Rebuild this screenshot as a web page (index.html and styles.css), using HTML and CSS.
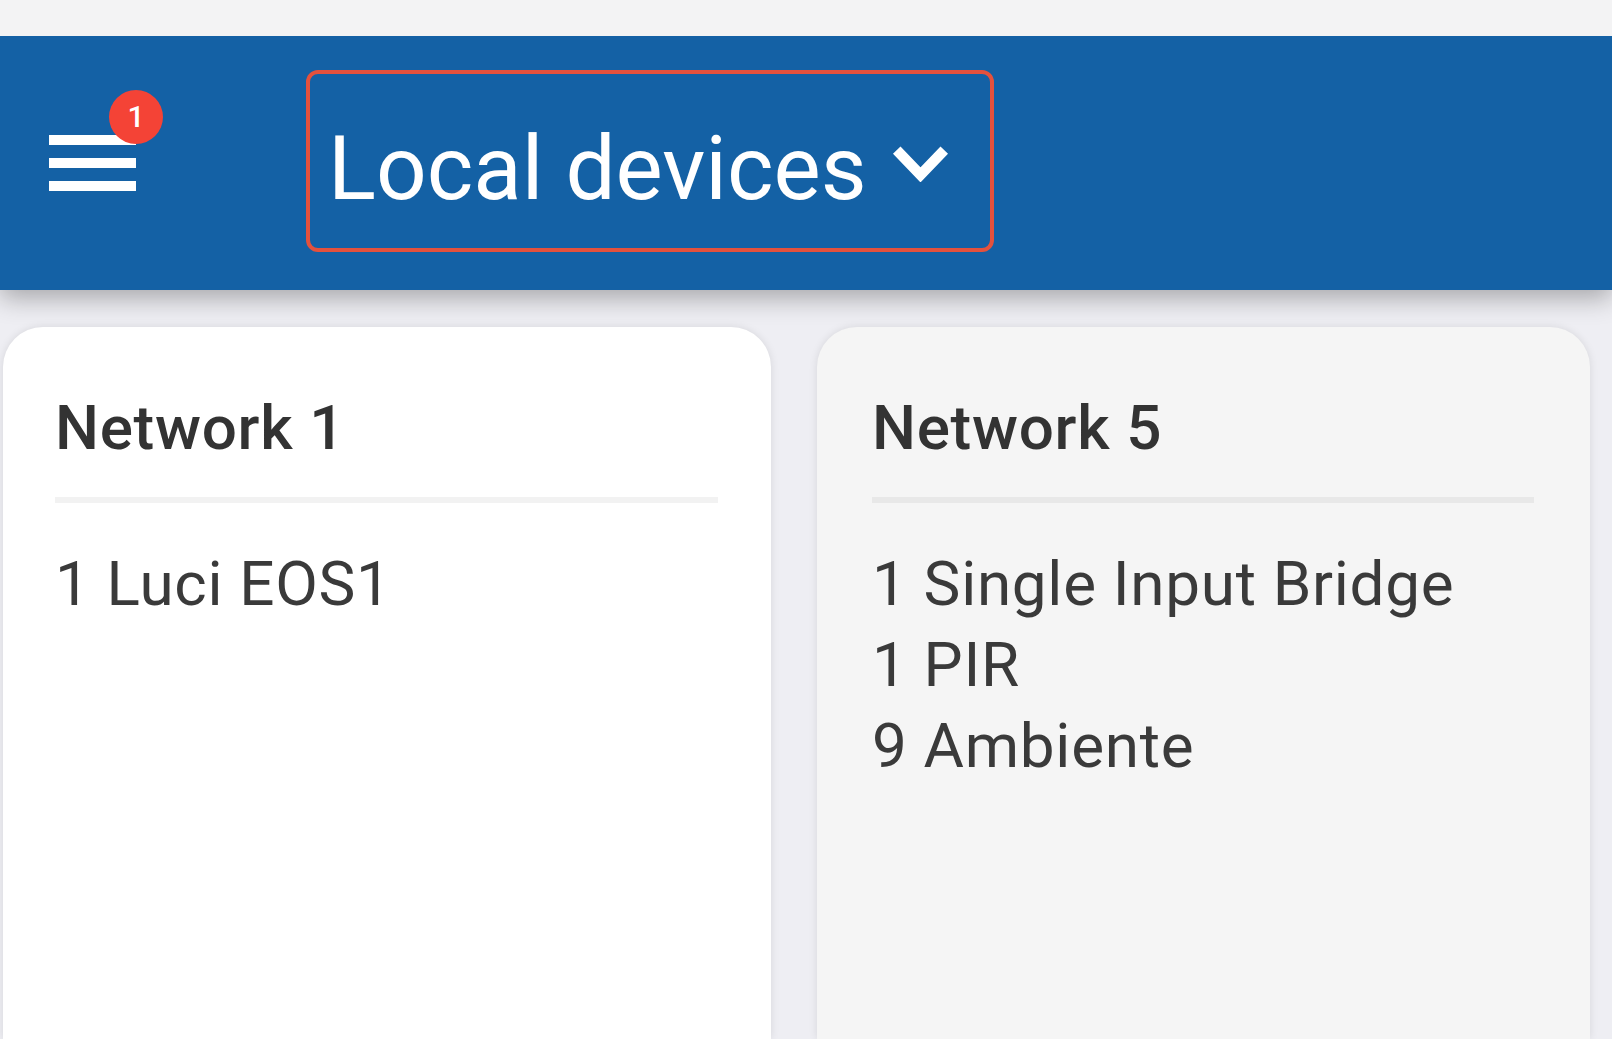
FILE: index.html
```html
<!DOCTYPE html>
<html>
<head>
  <title>Local devices</title>
  <meta charset="UTF-8">
  <link rel="stylesheet" href="styles.css">
</head>
<body>
  <div class="status-strip"></div>
  <header class="app-bar">
    <div class="menu-btn">
      <span class="menu-line"></span>
      <span class="menu-line"></span>
      <span class="menu-line"></span>
      <span class="badge">1</span>
    </div>
    <div class="device-select">
      <span class="device-select-label">Local devices</span>
      <svg class="chevron" viewBox="0 0 60 38" width="57" height="37">
        <path d="M5 5 L30 31 L55 5" fill="none" stroke="#ffffff" stroke-width="11"/>
      </svg>
    </div>
  </header>
  <main class="network-grid">
    <section class="card">
      <h2 class="card-title">Network 1</h2>
      <ul class="device-list">
        <li>1 Luci EOS1</li>
      </ul>
    </section>
    <section class="card card-muted">
      <h2 class="card-title">Network 5</h2>
      <ul class="device-list">
        <li>1 Single Input Bridge</li>
        <li>1 PIR</li>
        <li>9 Ambiente</li>
      </ul>
    </section>
  </main>
</body>
</html>
```

FILE: styles.css
```css
* {
  margin: 0;
  padding: 0;
  box-sizing: border-box;
}

html, body {
  height: 100%;
  overflow: hidden;
}

body {
  font-family: Roboto, 'Liberation Sans', sans-serif;
  background: #eeeef3;
  display: flex;
  flex-direction: column;
}

.status-strip {
  height: 36px;
  background: #f3f3f4;
}

/* Top bar */
.app-bar {
  height: 254px;
  background: #1461a5;
  display: flex;
  align-items: center;
  padding-left: 49px;
  box-shadow: 0 8px 24px rgba(0, 0, 0, 0.3);
  clip-path: inset(0 0 -50px 0); /* no shadow over the top strip */
  position: relative;
  z-index: 1;
}

.menu-btn {
  position: relative;
  width: 87px;
  display: flex;
  flex-direction: column;
  gap: 13px;
}

.menu-line {
  height: 10px;
  background: #ffffff;
  filter: blur(0.6px);
}

.badge {
  position: absolute;
  top: -45px;
  right: -27px;
  width: 54px;
  height: 54px;
  border-radius: 50%;
  background: #f44336;
  color: #ffffff;
  font-size: 30px;
  font-weight: 500;
  line-height: 54px;
  text-align: center;
}

.device-select {
  margin-left: 170px;
  width: 688px;
  height: 182px;
  border: 4px solid #e4513d;
  border-radius: 12px;
  display: flex;
  align-items: center;
  padding-left: 18px;
  margin-top: -4px;
}

.device-select-label {
  font-size: 89px;
  color: #ffffff;
  line-height: 1;
  margin-top: 14px;
  filter: blur(0.6px);
}

.chevron {
  margin-left: 25px;
  margin-top: 4px;
  filter: blur(0.6px);
}

/* Network cards */
.network-grid {
  flex: 1;
  display: grid;
  grid-template-columns: 768px 773px;
  gap: 46px;
  padding: 37px 22px 0 3px;
  min-height: 0;
}

.card {
  background: #ffffff;
  border-radius: 40px 40px 0 0;
  padding: 65px 53px 0 52px;
  box-shadow: 0 0 8px rgba(0, 0, 0, 0.1);
}

.card-muted {
  background: #f5f5f5;
  padding-left: 55px;
  padding-right: 56px;
}

.card-title {
  font-size: 62px;
  font-weight: 500;
  letter-spacing: 0.7px;
  color: #333333;
  line-height: 72px;
  padding-bottom: 33px;
  border-bottom: 6px solid #f2f2f2;
}

.card-muted .card-title {
  border-bottom-color: #e8e8e8;
}

.device-list {
  list-style: none;
  margin-top: 40px;
}

.device-list li {
  font-size: 62px;
  letter-spacing: 0.7px;
  color: #3a3a3a;
  line-height: 81px;
  filter: blur(0.6px);
}
```
